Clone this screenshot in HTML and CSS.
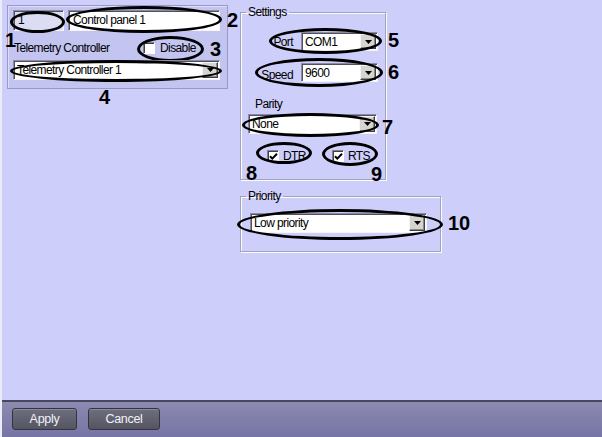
FILE: index.html
```html
<!DOCTYPE html>
<html>
<head>
<meta charset="utf-8">
<link rel="stylesheet" href="styles.css">
</head>
<body>
<div class="window">
  <div class="main">
    <div class="panel">
      <div class="row1">
        <div class="field id-field">1<span class="oval ov-id"></span><span class="num num-1">1</span></div>
        <div class="field name-field">Control panel 1<span class="oval ov-name"></span><span class="num num-2">2</span></div>
      </div>
      <div class="row2">
        <span class="lbl tc-lbl">Telemetry Controller</span>
        <div class="check disable">
          <span class="box"></span><span class="lbl">Disable</span>
          <span class="oval ov-disable"></span><span class="num num-3">3</span>
        </div>
      </div>
      <div class="combo tc-combo">
        <span class="combo-text">Telemetry Controller 1</span>
        <span class="combo-btn"><svg width="7" height="4" viewBox="0 0 7 4"><path d="M0 0h7L3.5 4z" fill="#000"/></svg></span>
        <span class="oval ov-tc"></span><span class="num num-4">4</span>
      </div>
    </div>

    <div class="right">
      <fieldset class="group settings">
        <legend>Settings</legend>
        <div class="lrow port-row">
          <span class="lbl rlbl">Port</span>
          <div class="combo small">
            <span class="combo-text">COM1</span>
            <span class="combo-btn"><svg width="7" height="4" viewBox="0 0 7 4"><path d="M0 0h7L3.5 4z" fill="#000"/></svg></span>
          </div>
          <span class="oval ov-port"></span><span class="num num-5">5</span>
        </div>
        <div class="lrow speed-row">
          <span class="lbl rlbl">Speed</span>
          <div class="combo small">
            <span class="combo-text">9600</span>
            <span class="combo-btn"><svg width="7" height="4" viewBox="0 0 7 4"><path d="M0 0h7L3.5 4z" fill="#000"/></svg></span>
          </div>
          <span class="oval ov-speed"></span><span class="num num-6">6</span>
        </div>
        <div class="lbl parity-lbl">Parity</div>
        <div class="combo parity-combo">
          <span class="combo-text">None</span>
          <span class="combo-btn"><svg width="7" height="4" viewBox="0 0 7 4"><path d="M0 0h7L3.5 4z" fill="#000"/></svg></span>
          <span class="oval ov-parity"></span><span class="num num-7">7</span>
        </div>
        <div class="checks">
          <div class="check dtr">
            <span class="box checked"><svg width="9" height="9" viewBox="0 0 9 9"><path d="M1 4.2l2.3 2.4L8 1.8" fill="none" stroke="#000" stroke-width="2"/></svg></span><span class="lbl">DTR</span>
            <span class="oval ov-dtr"></span>
          </div>
          <div class="check rts">
            <span class="box checked"><svg width="9" height="9" viewBox="0 0 9 9"><path d="M1 4.2l2.3 2.4L8 1.8" fill="none" stroke="#000" stroke-width="2"/></svg></span><span class="lbl">RTS</span>
            <span class="oval ov-rts"></span>
          </div>
          <span class="num num-8">8</span><span class="num num-9">9</span>
        </div>
      </fieldset>

      <fieldset class="group priority">
        <legend>Priority</legend>
        <div class="combo priority-combo">
          <span class="combo-text">Low priority</span>
          <span class="combo-btn"><svg width="7" height="4" viewBox="0 0 7 4"><path d="M0 0h7L3.5 4z" fill="#000"/></svg></span>
          <span class="oval ov-priority"></span><span class="num num-10">10</span>
        </div>
      </fieldset>
    </div>
  </div>
  <div class="footer">
    <button class="btn apply">Apply</button>
    <button class="btn cancel">Cancel</button>
  </div>
</div>
</body>
</html>
```

FILE: styles.css
```css
* { box-sizing: border-box; }
html, body { margin: 0; padding: 0; }
body {
  width: 602px;
  height: 437px;
  overflow: hidden;
  font-family: "Liberation Sans", Arial, sans-serif;
  font-size: 12px;
  letter-spacing: -0.6px;
  color: #000;
  background: #cecefa;
}
.window {
  width: 602px;
  height: 437px;
  border-left: 2px solid #ececf6;
  display: flex;
  flex-direction: column;
}
.main {
  height: 400px;
  display: flex;
  align-items: flex-start;
  padding: 5px 0 0 5px;
  background: #cecefa;
}

/* left panel */
.panel {
  width: 221px;
  height: 84px;
  border: 1px solid #9a98c4;
  background: #c4c4f0;
  box-shadow: inset 1px 1px 0 #dcdcfc;
  padding: 4px 0 0 5px;
}
.row1 { display: flex; gap: 4px; }
.field {
  position: relative;
  height: 21px;
  line-height: 19px;
  padding-left: 4px;
  border: 1px solid;
  border-color: #8a8aa4 #f4f4fa #f4f4fa #8a8aa4;
  box-shadow: inset 1px 1px 0 #50505e;
  background: #fff;
  white-space: nowrap;
}
.id-field { width: 51px; background: #dcdcf2; }
.name-field { width: 152px; }
.row2 {
  display: flex;
  align-items: center;
  height: 21px;
  margin-top: 6px;
}
.tc-lbl { width: 130px; padding-left: 1px; }
.check {
  position: relative;
  display: flex;
  align-items: center;
  gap: 5px;
  align-self: stretch;
}
.box {
  width: 12px;
  height: 12px;
  flex: none;
  background: #fff;
  border: 1px solid;
  border-color: #808090 #fff #fff #808090;
  box-shadow: inset 1px 1px 0 #404048;
  display: flex;
  align-items: center;
  justify-content: center;
  padding: 1px 0 0 1px;
}
.box svg { display: block; }

/* combo */
.combo {
  position: relative;
  display: flex;
  height: 20px;
  background: #fff;
  border: 1px solid;
  border-color: #8a8aa4 #f4f4fa #f4f4fa #8a8aa4;
  box-shadow: inset 1px 1px 0 #50505e;
  padding: 1px;
}
.combo-text {
  flex: 1;
  line-height: 16px;
  padding-left: 2px;
  white-space: nowrap;
}
.combo-btn {
  width: 16px;
  flex: none;
  background: #d6d4d0;
  border: 1px solid;
  border-color: #f4f4f4 #404040 #404040 #f4f4f4;
  box-shadow: inset -1px -1px 0 #8a8a8a;
  display: flex;
  align-items: center;
  justify-content: center;
}
.combo-btn svg { display: block; }
.tc-combo { width: 207px; margin-top: 2px; }

/* right column */
.right {
  margin-left: 12px;
  display: flex;
  flex-direction: column;
}
.group {
  margin: 0;
  padding: 0 7px 0 8px;
  border: 1px solid #a2a2b8;
  box-shadow: inset 1px 1px 0 #fafaff, 1px 1px 0 #fafaff;
  min-width: 0;
}
.group legend {
  padding: 0 2px;
  margin-left: -3px;
  line-height: 13px;
}
.settings { width: 146px; height: 174px; margin-top: 1px; }
.lrow {
  position: relative;
  display: flex;
  align-items: center;
  gap: 8px;
  height: 19px;
}
.rlbl { flex: 1; text-align: right; }
.combo.small { width: 77px; height: 19px; }
.port-row { margin-top: 13px; }
.speed-row { margin-top: 12px; }
.speed-row .rlbl { padding-top: 4px; }
.parity-lbl { margin: 16px 0 0 6px; line-height: 13px; }
.parity-combo { width: 129px; margin: 3px 0 0 -1px; }
.checks {
  position: relative;
  display: flex;
  align-items: center;
  height: 13px;
  margin: 15px 0 0 18px;
}
.checks .check { gap: 4px; }
.dtr { width: 65px; }

.priority { width: 201px; height: 62px; margin-top: 10px; }
.priority-combo { width: 177px; height: 20px; margin: 10px 0 0 1px; }

/* annotations */
.oval {
  position: absolute;
  border: 3px solid #000;
  border-radius: 50%;
  pointer-events: none;
}
.ov-id { left: -4px; right: -2px; top: 0px; bottom: -3px; }
.ov-name { left: -3px; right: -3px; top: -5px; bottom: -3px; }
.ov-disable { left: -6px; right: -8px; top: -1px; bottom: -4px; }
.ov-tc { left: -4px; right: -3px; top: -1px; bottom: -3px; }
.ov-port { left: 20px; right: -4px; top: -4px; bottom: -3px; }
.ov-speed { left: 6px; right: -5px; top: -5px; bottom: -5px; }
.ov-parity { left: -7px; right: -3px; top: -2px; bottom: -4px; }
.ov-dtr { left: -11px; width: 56px; top: -7px; height: 22px; }
.ov-rts { left: -10px; width: 56px; top: -7px; height: 24px; }
.ov-priority { left: -14px; right: -17px; top: -5px; bottom: -8px; }

.num {
  position: absolute;
  font-family: "Liberation Sans", Arial, sans-serif;
  font-weight: bold;
  font-size: 20px;
  line-height: 20px;
  letter-spacing: 0;
}
.num-1 { left: -9px; top: 19px; }
.num-2 { left: calc(100% + 8px); top: -1px; }
.num-3 { left: 67px; top: 2px; }
.num-4 { left: 85px; top: 26px; }
.num-5 { left: 139px; top: -2px; }
.num-6 { left: 139px; top: -1px; }
.num-7 { left: 133px; top: 2px; }
.num-8 { left: -21px; top: 14px; }
.num-9 { left: 104px; top: 15px; }
.num-10 { left: 197px; top: -1px; }

/* footer */
.footer {
  height: 37px;
  border-top: 2px solid #46465e;
  background: linear-gradient(#8c8ab0, #7674a4);
  display: flex;
  align-items: flex-start;
  gap: 11px;
  padding: 6px 0 0 10px;
}
.btn {
  height: 22px;
  border: 1px solid #34343f;
  border-radius: 3px;
  background: linear-gradient(#6e6e7e, #545462);
  box-shadow: inset 0 1px 0 #8a8a9a;
  color: #f2f2f6;
  font-family: "Liberation Sans", Arial, sans-serif;
  font-size: 12.5px;
  letter-spacing: -0.3px;
  padding: 0;
}
.apply { width: 65px; }
.cancel { width: 72px; }
```
